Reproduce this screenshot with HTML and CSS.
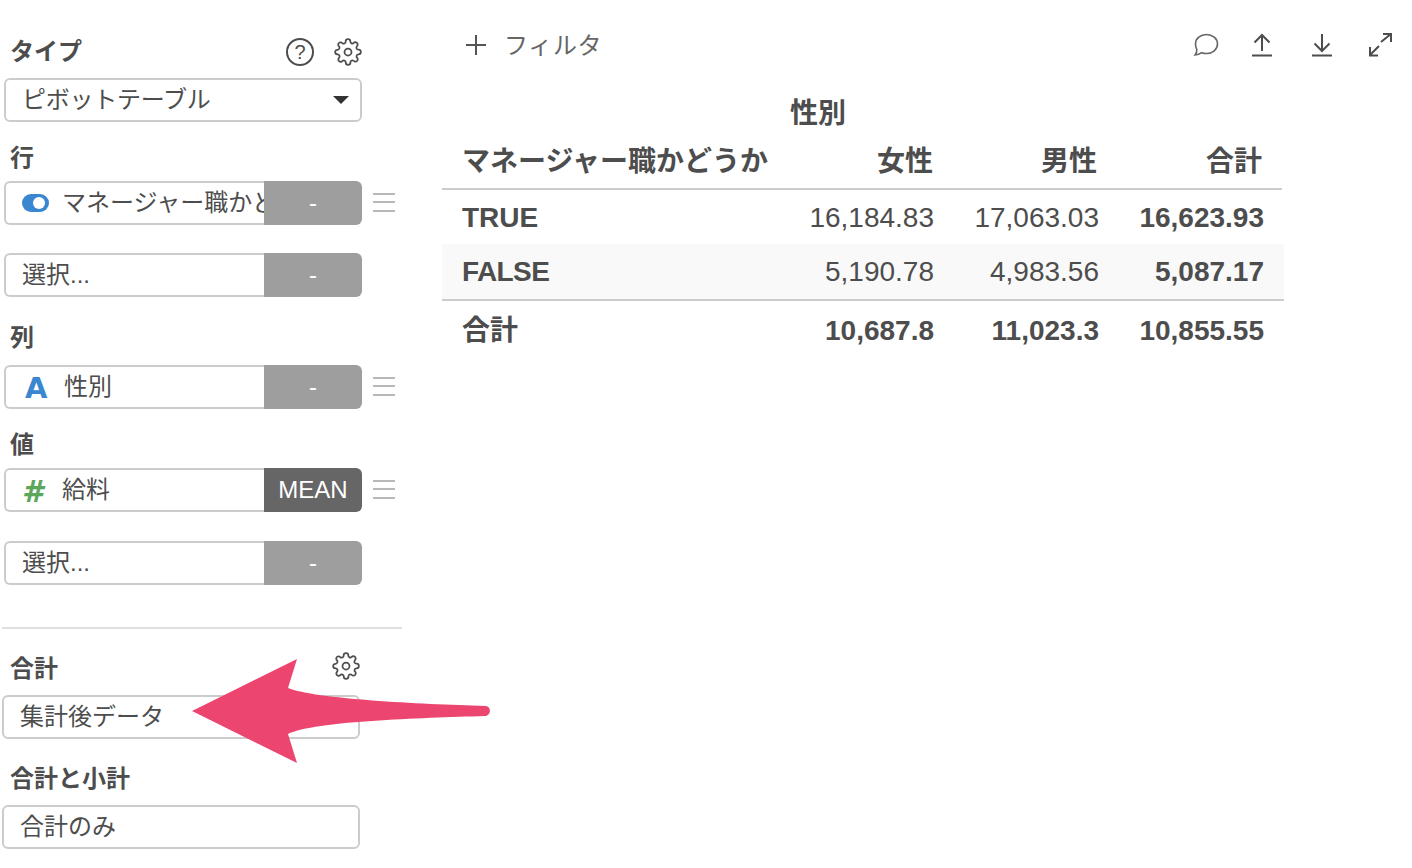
FILE: index.html
```html
<!DOCTYPE html>
<html lang="ja">
<head>
<meta charset="utf-8">
<title>ピボットテーブル</title>
<link rel="stylesheet" href="styles.css">
</head>
<body>
<div class="page">
  <aside class="sidebar">
    <div class="group">
      <div class="label-row">
        <span class="label">タイプ</span>
        <span class="tools">
          <span class="help">?</span>
          <svg class="gear" viewBox="0 0 24 24"><circle cx="12" cy="12" r="3"/><path d="M19.4 15a1.65 1.65 0 0 0 .33 1.82l.06.06a2 2 0 0 1 0 2.83 2 2 0 0 1-2.83 0l-.06-.06a1.65 1.65 0 0 0-1.82-.33 1.65 1.65 0 0 0-1 1.51V21a2 2 0 0 1-2 2 2 2 0 0 1-2-2v-.09A1.65 1.65 0 0 0 9 19.4a1.65 1.65 0 0 0-1.82.33l-.06.06a2 2 0 0 1-2.83 0 2 2 0 0 1 0-2.83l.06-.06a1.65 1.65 0 0 0 .33-1.82 1.65 1.65 0 0 0-1.51-1H3a2 2 0 0 1-2-2 2 2 0 0 1 2-2h.09A1.65 1.65 0 0 0 4.6 9a1.65 1.65 0 0 0-.33-1.82l-.06-.06a2 2 0 0 1 0-2.83 2 2 0 0 1 2.83 0l.06.06a1.65 1.65 0 0 0 1.82.33H9a1.65 1.65 0 0 0 1-1.51V3a2 2 0 0 1 2-2 2 2 0 0 1 2 2v.09a1.65 1.65 0 0 0 1 1.51 1.65 1.65 0 0 0 1.82-.33l.06-.06a2 2 0 0 1 2.83 0 2 2 0 0 1 0 2.83l-.06.06a1.65 1.65 0 0 0-.33 1.82V9a1.65 1.65 0 0 0 1.51 1H21a2 2 0 0 1 2 2 2 2 0 0 1-2 2h-.09a1.65 1.65 0 0 0-1.51 1z"/></svg>
        </span>
      </div>
      <div class="select select-main"><span class="select-text">ピボットテーブル</span><span class="caret"></span></div>
    </div>

    <div class="group gap-20">
      <div class="label-row tight"><span class="label">行</span></div>
      <div class="field-row">
        <div class="field"><span class="toggle"></span><span class="field-text">マネージャー職かどうか</span></div>
        <div class="agg">-</div>
        <div class="drag"><i></i><i></i><i></i></div>
      </div>
      <div class="field-row next">
        <div class="field plain"><span class="field-text">選択...</span></div>
        <div class="agg">-</div>
      </div>
    </div>

    <div class="group gap-26">
      <div class="label-row"><span class="label label-kanji">列</span></div>
      <div class="field-row">
        <div class="field"><span class="type-a">A</span><span class="field-text">性別</span></div>
        <div class="agg">-</div>
        <div class="drag"><i></i><i></i><i></i></div>
      </div>
    </div>

    <div class="group gap-20">
      <div class="label-row tight"><span class="label">値</span></div>
      <div class="field-row">
        <div class="field"><span class="type-num">#</span><span class="field-text">給料</span></div>
        <div class="agg agg-on">MEAN</div>
        <div class="drag"><i></i><i></i><i></i></div>
      </div>
      <div class="field-row next-29">
        <div class="field plain"><span class="field-text">選択...</span></div>
        <div class="agg">-</div>
      </div>
    </div>

    <hr class="divider">

    <div class="group lower gap-24">
      <div class="label-row">
        <span class="label">合計</span>
        <span class="tools">
          <svg class="gear" viewBox="0 0 24 24"><circle cx="12" cy="12" r="3"/><path d="M19.4 15a1.65 1.65 0 0 0 .33 1.82l.06.06a2 2 0 0 1 0 2.83 2 2 0 0 1-2.83 0l-.06-.06a1.65 1.65 0 0 0-1.82-.33 1.65 1.65 0 0 0-1 1.51V21a2 2 0 0 1-2 2 2 2 0 0 1-2-2v-.09A1.65 1.65 0 0 0 9 19.4a1.65 1.65 0 0 0-1.82.33l-.06.06a2 2 0 0 1-2.83 0 2 2 0 0 1 0-2.83l.06-.06a1.65 1.65 0 0 0 .33-1.82 1.65 1.65 0 0 0-1.51-1H3a2 2 0 0 1-2-2 2 2 0 0 1 2-2h.09A1.65 1.65 0 0 0 4.6 9a1.65 1.65 0 0 0-.33-1.82l-.06-.06a2 2 0 0 1 0-2.83 2 2 0 0 1 2.83 0l.06.06a1.65 1.65 0 0 0 1.82.33H9a1.65 1.65 0 0 0 1-1.51V3a2 2 0 0 1 2-2 2 2 0 0 1 2 2v.09a1.65 1.65 0 0 0 1 1.51 1.65 1.65 0 0 0 1.82-.33l.06-.06a2 2 0 0 1 2.83 0 2 2 0 0 1 0 2.83l-.06.06a1.65 1.65 0 0 0-.33 1.82V9a1.65 1.65 0 0 0 1.51 1H21a2 2 0 0 1 2 2 2 2 0 0 1-2 2h-.09a1.65 1.65 0 0 0-1.51 1z"/></svg>
        </span>
      </div>
      <div class="select"><span class="select-text">集計後データ</span></div>
    </div>

    <div class="group lower gap-24b">
      <div class="label-row"><span class="label">合計と小計</span></div>
      <div class="select"><span class="select-text">合計のみ</span></div>
    </div>
  </aside>

  <main class="content">
    <div class="toolbar">
      <div class="filter">
        <svg class="plus" viewBox="0 0 20 20"><path d="M10 0v20M0 10h20"/></svg>
        <span class="filter-text">フィルタ</span>
      </div>
      <div class="actions">
        <svg class="act act-chat" viewBox="0 0 26 24"><path d="M13.500 1.500c6 0 11 4 11 9.500s-5 9.500-11 9.500c-1.700 0-3.300-.3-4.800-.8C6.800 21.200 4.500 22 2 22 3.200 20.500 4 19 3.800 16.500 3 15 2.500 13 2.500 11c0-5.500 5-9.500 11-9.500z"/></svg>
        <svg class="act" viewBox="0 0 24 24"><path d="M2 22.500h20M12 18V2M4.500 9.500 12 2l7.500 7.500"/></svg>
        <svg class="act" viewBox="0 0 24 24"><path d="M2 22.500h20M12 1v17M4.500 10.500 12 18l7.500-7.500"/></svg>
        <svg class="act act-expand" viewBox="0 0 24 24"><path d="M12 9 22.500.5M14 1h8v8M10 13 .5 22.500M1 14v8.500h8"/></svg>
      </div>
    </div>

    <table class="pivot">
      <thead>
        <tr class="dim"><th></th><th class="dim-name">性別</th><th></th><th></th></tr>
        <tr class="cols"><th class="first">マネージャー職かどうか</th><th class="c-f">女性</th><th class="c-m">男性</th><th class="c-t">合計</th></tr>
      </thead>
      <tbody>
        <tr class="row-a"><th class="first">TRUE</th><td>16,184.83</td><td>17,063.03</td><td class="strong">16,623.93</td></tr>
        <tr class="alt"><th class="first kern">FALSE</th><td>5,190.78</td><td>4,983.56</td><td class="strong">5,087.17</td></tr>
        <tr class="total"><th class="first total-label">合計</th><td class="strong">10,687.8</td><td class="strong">11,023.3</td><td class="strong">10,855.55</td></tr>
      </tbody>
    </table>
  </main>
</div>

<svg class="arrow" viewBox="0 0 310 116"><path d="M2 54 107 2 98 31C125 42 230 47 295 49 302 49 301 59 295 59 230 61 125 64 98 77L107 106Z"/></svg>
</body>
</html>
```
FILE: styles.css
```css
* { box-sizing: border-box; }
html, body { margin: 0; padding: 0; background: #fff; }
body {
  width: 1412px;
  height: 868px;
  overflow: hidden;
  position: relative;
  color: #4d4d4d;
  font-family: "Liberation Sans", "Noto Sans CJK JP", sans-serif;
  font-size: 24px;
}
.page { display: flex; align-items: flex-start; }

/* sidebar */
.sidebar { width: 402px; flex: none; padding-top: 35px; padding-left: 4px; }
.group { display: flex; flex-direction: column; }
.gap-20 { margin-top: 20px; }
.gap-26 { margin-top: 25px; }
.gap-24 { margin-top: 24px; }
.gap-24b { margin-top: 24px; }
.label-row {
  display: flex;
  justify-content: space-between;
  align-items: center;
  width: 358px;
  height: 30px;
  margin-bottom: 13px;
  padding-left: 6px;
}
.label-row.tight { margin-bottom: 9px; }
.label { font-weight: 700; line-height: 30px; padding-top: 3px; }
.label-row.tight .label { padding-top: 1px; }
.label.label-kanji { padding-top: 2px; }
.tools { display: flex; align-items: center; gap: 20px; margin-top: 4px; }
.help {
  width: 28px;
  height: 28px;
  border: 2px solid #4d4d4d;
  border-radius: 50%;
  display: flex;
  align-items: center;
  justify-content: center;
  font-size: 20px;
  line-height: 1;
}
.gear {
  width: 28px;
  height: 28px;
  fill: none;
  stroke: #4d4d4d;
  stroke-width: 1.5;
}
.select {
  width: 358px;
  height: 44px;
  border: 2px solid #ccc;
  border-radius: 6px;
  background: #fff;
  display: flex;
  justify-content: space-between;
  align-items: center;
  padding: 0 11px 0 16px;
}
.select-text, .field-text { flex: none; padding-bottom: 5px; }
.select-main .select-text { letter-spacing: -0.25px; }
.caret {
  width: 0;
  height: 0;
  border-left: 8px solid transparent;
  border-right: 8px solid transparent;
  border-top: 8px solid #333;
}
.field-row { display: flex; align-items: center; height: 44px; }
.field-row.next { margin-top: 28px; }
.field-row.next-29 { margin-top: 29px; }
.field {
  width: 260px;
  height: 44px;
  border: 2px solid #ccc;
  border-right: 0;
  border-radius: 6px 0 0 6px;
  display: flex;
  align-items: center;
  overflow: hidden;
  white-space: nowrap;
  padding-left: 16px;
  background: #fff;
}
.toggle {
  flex: none;
  position: relative;
  width: 27px;
  height: 18px;
  border-radius: 9px;
  background: #3a86d0;
  margin-right: 13px;
}
.toggle::after {
  content: "";
  position: absolute;
  right: 4px;
  top: 3px;
  width: 12px;
  height: 12px;
  border-radius: 50%;
  background: #fff;
}
.type-a {
  flex: none;
  width: 42px;
  padding-left: 3px;
  padding-top: 2px;
  color: #3a86d0;
  font-family: "DejaVu Sans", sans-serif;
  font-weight: 700;
  font-size: 29px;
  line-height: 1;
}
.type-num {
  flex: none;
  width: 40px;
  padding-top: 3px;
  color: #5ba85b;
  font-weight: 700;
  font-style: italic;
  font-size: 30px;
  line-height: 1;
  font-family: "DejaVu Sans", sans-serif;
}
.agg {
  width: 98px;
  height: 44px;
  flex: none;
  background: #9e9e9e;
  color: #fff;
  border-radius: 0 6px 6px 0;
  display: flex;
  align-items: center;
  justify-content: center;
}
.agg-on { background: #666; }
.drag {
  width: 22px;
  margin-left: 11px;
  margin-top: -2px;
  display: flex;
  flex-direction: column;
  gap: 6.5px;
}
.drag i { display: block; height: 2px; background: #b8b8b8; }
.divider {
  margin: 42px 0 0 -2px;
  width: 400px;
  height: 2px;
  border: 0;
  background: #e0e0e0;
}
.lower { margin-left: -2px; }
.lower .label-row { margin-bottom: 12px; padding-left: 8px; }
.lower .tools { margin-top: -4px; }
.lower .label { padding-top: 2px; }

/* main */
.content { flex: none; width: 1010px; padding-left: 40px; }
.toolbar {
  display: flex;
  justify-content: space-between;
  align-items: center;
  height: 30px;
  margin-top: 30px;
}
.filter { display: flex; align-items: center; gap: 18px; padding-left: 24px; color: #666; }
.filter-text { letter-spacing: 0.7px; padding-bottom: 4px; }
.plus { width: 20px; height: 20px; fill: none; stroke: #555; stroke-width: 2; }
.actions { display: flex; align-items: center; gap: 36px; padding-right: 19px; }
.act { width: 24px; height: 24px; fill: none; stroke: #4d4d4d; stroke-width: 2; }
.act-chat { width: 26px; margin-right: -5px; stroke-width: 1.6; stroke: #666; }
.act-expand { margin-left: -1px; }

.pivot {
  border-collapse: collapse;
  table-layout: fixed;
  width: 842px;
  margin-top: 30px;
  font-size: 28px;
  line-height: 40px;
}
.pivot th, .pivot td { padding: 0 20px 0 0; text-align: right; font-weight: 400; }
.pivot th:first-child { width: 347px; }
.pivot .first { text-align: left; padding-left: 20px; font-weight: 700; white-space: nowrap; }
.pivot th { font-weight: 700; }
.pivot .dim th { height: 43px; padding-top: 5px; line-height: 38px; }
.pivot .dim .dim-name { text-align: left; padding-left: 1px; font-weight: 700; }
.pivot .cols th {
  height: 56px;
  padding-top: 3px;
  vertical-align: middle;
  font-weight: 700;
  border-bottom: 2px solid #ccc;
}
.pivot .cols .c-f { padding-right: 21px; }
.pivot .cols .c-m { padding-right: 22px; }
.pivot .cols .c-t { padding-right: 22px; position: relative; }
.pivot .cols .c-t::after {
  content: "";
  position: absolute;
  right: 0;
  bottom: -2px;
  width: 2px;
  height: 3px;
  background: #fff;
}
.pivot .row-a { height: 55px; }
.pivot .row-a th, .pivot .row-a td { padding-top: 2px; }
.pivot .alt { height: 56px; background: #f9f9f9; border-bottom: 2px solid #ccc; }
.pivot .total { height: 58px; }
.pivot .total td { padding-top: 2px; }
.pivot .total-label { padding-top: 3px; }
.pivot .kern { letter-spacing: -0.6px; }
.pivot .strong { font-weight: 700; }

/* annotation */
.arrow {
  position: absolute;
  left: 190px;
  top: 657px;
  width: 310px;
  height: 116px;
}
.arrow path { fill: #ec4670; }
```
